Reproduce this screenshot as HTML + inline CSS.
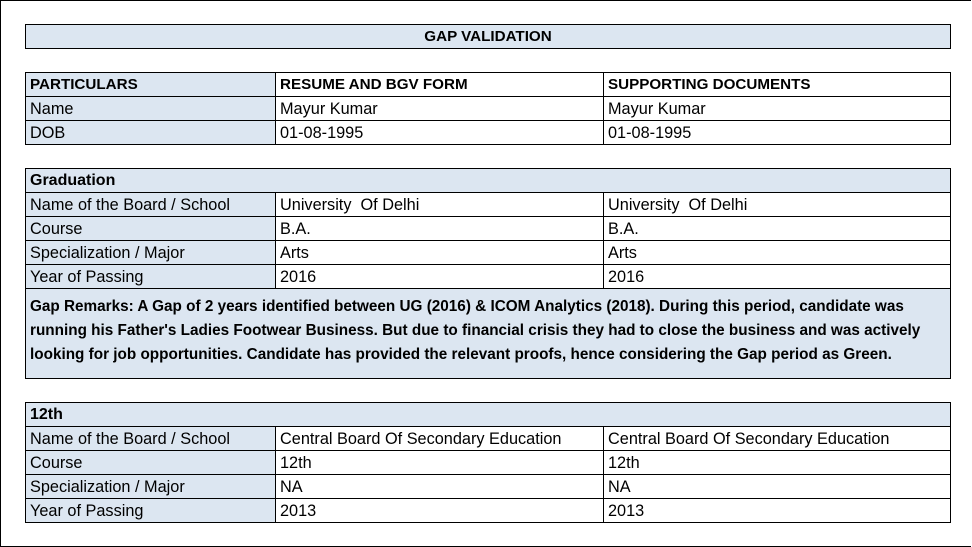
<!DOCTYPE html>
<html><head><meta charset="utf-8"><style>
body{margin:0;width:972px;height:547px;background:#fff;position:relative;overflow:hidden;font-family:"Liberation Sans",sans-serif;color:#000}
.frame{position:absolute;left:0;top:0;width:970px;height:545px;border:1px solid #000;border-right:none}
.c{position:absolute;box-sizing:border-box;border:1px solid #000;height:25px;font-size:16.3px;line-height:25px;padding-left:4px;white-space:nowrap;overflow:hidden}
.b{background:#dce6f1}
.h{font-weight:bold;font-size:15.2px;line-height:24px;transform-origin:left}
.rm{position:absolute;left:25px;top:288px;width:926px;height:91px;box-sizing:border-box;border:1px solid #000;background:#dce6f1;font-weight:bold;font-size:15.3px;line-height:24px;padding:6px 0 0 4px;white-space:nowrap}
</style></head><body>
<div class="frame"></div>
<div class="c b h" style="left:25px;top:24px;width:926px;text-align:center;padding:0">GAP VALIDATION</div>

<div class="c b h" style="left:25px;top:72px;width:251px">PARTICULARS</div>
<div class="c h" style="left:275px;top:72px;width:329px">RESUME AND BGV FORM</div>
<div class="c h" style="left:603px;top:72px;width:348px">SUPPORTING DOCUMENTS</div>
<div class="c b" style="left:25px;top:96px;width:251px">Name</div>
<div class="c" style="left:275px;top:96px;width:329px">Mayur Kumar</div>
<div class="c" style="left:603px;top:96px;width:348px">Mayur Kumar</div>
<div class="c b" style="left:25px;top:120px;width:251px">DOB</div>
<div class="c" style="left:275px;top:120px;width:329px">01-08-1995</div>
<div class="c" style="left:603px;top:120px;width:348px">01-08-1995</div>

<div class="c b h" style="left:25px;top:168px;width:926px;font-size:16px">Graduation</div>
<div class="c b" style="left:25px;top:192px;width:251px">Name of the Board / School</div>
<div class="c" style="left:275px;top:192px;width:329px">University&nbsp; Of Delhi</div>
<div class="c" style="left:603px;top:192px;width:348px">University&nbsp; Of Delhi</div>
<div class="c b" style="left:25px;top:216px;width:251px">Course</div>
<div class="c" style="left:275px;top:216px;width:329px">B.A.</div>
<div class="c" style="left:603px;top:216px;width:348px">B.A.</div>
<div class="c b" style="left:25px;top:240px;width:251px">Specialization / Major</div>
<div class="c" style="left:275px;top:240px;width:329px">Arts</div>
<div class="c" style="left:603px;top:240px;width:348px">Arts</div>
<div class="c b" style="left:25px;top:264px;width:251px">Year of Passing</div>
<div class="c" style="left:275px;top:264px;width:329px">2016</div>
<div class="c" style="left:603px;top:264px;width:348px">2016</div>
<div class="rm">Gap Remarks: A Gap of 2 years identified between UG (2016) &amp; ICOM Analytics (2018). During this period, candidate was<br>running his Father's Ladies Footwear Business. But due to financial crisis they had to close the business and was actively<br>looking for job opportunities. Candidate has provided the relevant proofs, hence considering the Gap period as Green.</div>

<div class="c b h" style="left:25px;top:402px;width:926px;font-size:16px">12th</div>
<div class="c b" style="left:25px;top:426px;width:251px">Name of the Board / School</div>
<div class="c" style="left:275px;top:426px;width:329px">Central Board Of Secondary Education</div>
<div class="c" style="left:603px;top:426px;width:348px">Central Board Of Secondary Education</div>
<div class="c b" style="left:25px;top:450px;width:251px">Course</div>
<div class="c" style="left:275px;top:450px;width:329px">12th</div>
<div class="c" style="left:603px;top:450px;width:348px">12th</div>
<div class="c b" style="left:25px;top:474px;width:251px">Specialization / Major</div>
<div class="c" style="left:275px;top:474px;width:329px">NA</div>
<div class="c" style="left:603px;top:474px;width:348px">NA</div>
<div class="c b" style="left:25px;top:498px;width:251px">Year of Passing</div>
<div class="c" style="left:275px;top:498px;width:329px">2013</div>
<div class="c" style="left:603px;top:498px;width:348px">2013</div>
</body></html>
